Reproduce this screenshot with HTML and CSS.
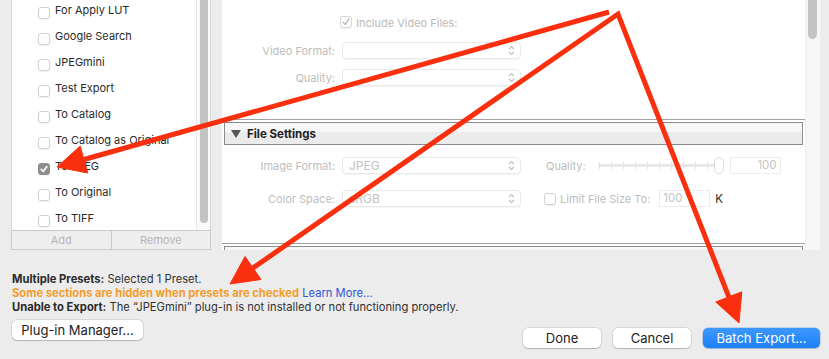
FILE: index.html
```html
<!DOCTYPE html>
<html>
<head>
<meta charset="utf-8">
<link rel="stylesheet" href="styles.css">
</head>
<body>
<div class="top">
  <div class="presets">
    <div class="list">
      <div class="rows">
        <div class="row"><span class="cb"></span><span>For Apply LUT</span></div>
        <div class="row"><span class="cb"></span><span>Google Search</span></div>
        <div class="row"><span class="cb"></span><span>JPEGmini</span></div>
        <div class="row"><span class="cb"></span><span>Test Export</span></div>
        <div class="row"><span class="cb"></span><span>To Catalog</span></div>
        <div class="row"><span class="cb"></span><span>To Catalog as Original</span></div>
        <div class="row"><span class="cb cb-on"><svg viewBox="0 0 12 12" width="12" height="12"><path d="M3.2 6.3 L5.2 8.4 L8.9 3.6" fill="none" stroke="#fff" stroke-width="1.6" stroke-linecap="round" stroke-linejoin="round"/></svg></span><span>To JPEG</span></div>
        <div class="row"><span class="cb"></span><span>To Original</span></div>
        <div class="row"><span class="cb"></span><span>To TIFF</span></div>
      </div>
      <div class="vscroll"><div class="vthumb"></div></div>
    </div>
    <div class="listbtns"><div class="lb">Add</div><div class="lb">Remove</div></div>
  </div>
  <div class="main">
    <div class="video">
      <div class="incl"><span class="cb cb-dis"><svg viewBox="0 0 12 12" width="12" height="12"><path d="M3.2 6.3 L5.2 8.6 L8.9 2.8" fill="none" stroke="#b9b9b9" stroke-width="1.3" stroke-linecap="round" stroke-linejoin="round"/></svg></span><span class="incl-t">Include Video Files:</span></div>
      <div class="frow"><span class="lab">Video Format:</span><span class="pop"><span></span><svg class="chev" viewBox="0 0 7 11" width="7" height="11"><path d="M1 4 L3.5 1.5 L6 4 M1 7 L3.5 9.5 L6 7" fill="none" stroke="#bdbdbd" stroke-width="1.1"/></svg></span></div>
      <div class="frow gap"><span class="lab">Quality:</span><span class="pop"><span></span><svg class="chev" viewBox="0 0 7 11" width="7" height="11"><path d="M1 4 L3.5 1.5 L6 4 M1 7 L3.5 9.5 L6 7" fill="none" stroke="#bdbdbd" stroke-width="1.1"/></svg></span></div>
    </div>
    <div class="shead"><span class="tri"></span><span>File Settings</span></div>
    <div class="fileset">
      <div class="frow"><span class="lab">Image Format:</span><span class="pop"><span>JPEG</span><svg class="chev" viewBox="0 0 7 11" width="7" height="11"><path d="M1 4 L3.5 1.5 L6 4 M1 7 L3.5 9.5 L6 7" fill="none" stroke="#bdbdbd" stroke-width="1.1"/></svg></span>
        <span class="qlab">Quality:</span>
        <span class="slider"><span class="sthumb"></span></span>
        <span class="num">100</span>
      </div>
      <div class="frow gap2"><span class="lab">Color Space:</span><span class="pop"><span>sRGB</span><svg class="chev" viewBox="0 0 7 11" width="7" height="11"><path d="M1 4 L3.5 1.5 L6 4 M1 7 L3.5 9.5 L6 7" fill="none" stroke="#bdbdbd" stroke-width="1.1"/></svg></span>
        <span class="cb lim"></span><span class="limt">Limit File Size To:</span>
        <span class="inp">100</span><span class="k">K</span>
      </div>
    </div>
    <div class="shead"></div>
  </div>
  <div class="mscroll"><div class="mthumb"></div></div>
</div>
<div class="bottom">
  <div class="left">
    <div class="msgs">
      <div><b>Multiple Presets:</b> Selected 1 Preset.</div>
      <div><span class="warn">Some sections are hidden when presets are checked</span> <span class="link">Learn More...</span></div>
      <div><b>Unable to Export:</b> The “JPEGmini” plug-in is not installed or not functioning properly.</div>
    </div>
    <div class="btn plug">Plug-in Manager...</div>
  </div>
  <div class="right">
    <div class="btn b1">Done</div>
    <div class="btn b1">Cancel</div>
    <div class="btn primary">Batch Export...</div>
  </div>
</div>
<svg class="arrows" width="829" height="359" viewBox="0 0 829 359">
  <g fill="#f92f0e" stroke="#f92f0e">
    <line x1="609" y1="12" x2="84" y2="159.5" stroke-width="5"/>
    <polyline points="253,268 618,14 728.8,296.9" fill="none" stroke-width="5" stroke-linejoin="miter"/>
    <polygon points="57,167 87.8,173 80.2,146" stroke-width="1"/>
    <polygon points="230,284 261,279.5 245,256.5" stroke-width="1"/>
    <polygon points="739,323 741.8,291.8 715.8,302" stroke-width="1"/>
  </g>
</svg>
</body>
</html>
```
FILE: styles.css
```css
body {
  margin: 0;
  width: 829px;
  height: 359px;
  overflow: hidden;
  position: relative;
  background: #ececec;
  font-family: Inter, "Noto Sans", sans-serif;
  font-size: 11px;
  color: #262626;
}
.top {
  display: flex;
  height: 250px;
}
.presets {
  margin-left: 11px;
  width: 200px;
  display: flex;
  flex-direction: column;
}
.list {
  flex: 1;
  display: flex;
  background: #fff;
  border-left: 1px solid #d8d8d8;
  border-right: 1px solid #d8d8d8;
  overflow: hidden;
}
.rows {
  flex: 1;
  margin-top: -3px;
}
.row {
  height: 26px;
  display: flex;
  align-items: center;
  padding-left: 26px;
  color: #2a2a2a;
}
.cb {
  display: inline-block;
  width: 12px;
  height: 12px;
  box-sizing: border-box;
  border: 1px solid #d2d2d2;
  border-radius: 3px;
  background: #fff;
  box-shadow: 0 0.5px 1px rgba(0, 0, 0, 0.06);
  flex: none;
}
.row .cb {
  margin-right: 5px;
  margin-top: 5px;
}
.cb svg {
  display: block;
  margin: -1px;
}
.cb-on {
  background: #8e8e8e;
  border-color: #8e8e8e;
}
.cb-dis {
  border-color: #d6d6d6;
}
.vscroll {
  width: 13px;
  border-left: 1px solid #e8e8e8;
  background: #fafafa;
}
.vthumb {
  margin-left: 3px;
  margin-top: -6px;
  width: 8px;
  height: 229px;
  border-radius: 4px;
  background: #c3c3c3;
}
.listbtns {
  display: flex;
  height: 20px;
}
.lb {
  flex: 1;
  border: 1px solid #cacaca;
  text-align: center;
  line-height: 18px;
  color: #b6b6b6;
  background: #eeeeee;
}
.lb + .lb {
  margin-left: -1px;
}
.main {
  margin-left: 11px;
  width: 583px;
  background: #fff;
  overflow: hidden;
}
.mscroll {
  width: 14px;
  border-left: 1px solid #eeeeee;
  background: #f7f7f7;
}
.mthumb {
  margin-left: 2px;
  margin-top: -6px;
  width: 9px;
  height: 45px;
  border-radius: 4.5px;
  background: #c3c3c3;
}
.video {
  height: 120px;
  box-sizing: border-box;
  border-bottom: 1px solid #a2a2a2;
  padding-top: 16px;
}
.incl {
  display: flex;
  align-items: center;
  height: 12px;
  margin-left: 118px;
  margin-bottom: 14px;
  color: #bababa;
}
.incl-t {
  margin-left: 4px;
  margin-top: 1px;
}
.frow {
  display: flex;
  align-items: center;
  height: 17px;
  color: #bdbdbd;
}
.frow.gap {
  margin-top: 10px;
}
.frow.gap2 {
  margin-top: 16px;
}
.lab {
  width: 120px;
  box-sizing: border-box;
  padding-right: 7px;
  text-align: right;
}
.pop {
  width: 179px;
  height: 17px;
  box-sizing: border-box;
  border: 1px solid #e9e9e9;
  border-radius: 4px;
  box-shadow: 0 1px 1px rgba(0, 0, 0, 0.04);
  display: flex;
  align-items: center;
  justify-content: space-between;
  padding: 0 5px 0 6px;
  color: #c2c2c2;
  font-size: 12px;
}
.chev {
  display: block;
}
.shead {
  margin: 2px 2px 0;
  height: 23px;
  box-sizing: border-box;
  border: 1px solid #8c8c8c;
  background: linear-gradient(#f7f7f7 0 45%, #ebebeb 45%);
  display: flex;
  align-items: center;
  padding-left: 6px;
  font-weight: 700;
  font-size: 11.5px;
  color: #1e1e1e;
}
.tri {
  width: 0;
  height: 0;
  border-left: 5px solid transparent;
  border-right: 5px solid transparent;
  border-top: 8px solid #555;
  margin-right: 6px;
}
.fileset {
  height: 99px;
  box-sizing: border-box;
  border-bottom: 1px solid #a2a2a2;
  padding-top: 12px;
}
.qlab {
  margin-left: 25px;
}
.slider {
  position: relative;
  margin-left: 12px;
  width: 126px;
  height: 17px;
  background:
    repeating-linear-gradient(90deg, #e2e2e2 0 1px, transparent 1px 12px) 1px 5px / 120px 7px no-repeat,
    linear-gradient(#e8e8e8, #e8e8e8) 0 7px / 120px 3px no-repeat;
}
.sthumb {
  position: absolute;
  left: 116px;
  top: 0;
  width: 10px;
  height: 17px;
  box-sizing: border-box;
  border: 1px solid #dadada;
  border-radius: 5px;
  background: #fff;
}
.num {
  margin-left: 6px;
  width: 51px;
  height: 17px;
  box-sizing: border-box;
  border: 1px solid #ececec;
  text-align: right;
  padding-right: 3px;
  line-height: 15px;
  color: #c4c4c4;
  font-size: 11.5px;
}
.lim {
  margin-left: 23px;
}
.limt {
  margin-left: 4px;
}
.inp {
  margin-left: 9px;
  width: 51px;
  height: 17px;
  box-sizing: border-box;
  border: 1px solid #ececec;
  padding-left: 3px;
  line-height: 15px;
  color: #c4c4c4;
  font-size: 11.5px;
}
.k {
  margin-left: 5px;
  color: #2a2a2a;
  font-size: 11.5px;
}
.bottom {
  display: flex;
  justify-content: space-between;
  align-items: flex-end;
  height: 109px;
  box-sizing: border-box;
  padding: 22px 9px 11px 12px;
}
.msgs {
  line-height: 14px;
  font-size: 11.2px;
  color: #333;
}
.msgs b {
  font-weight: 700;
  color: #2a2a2a;
}
.warn {
  color: #f29d2c;
  font-weight: 700;
}
.link {
  color: #2d55d6;
}
.btn {
  height: 20px;
  box-sizing: border-box;
  background: #fff;
  border-radius: 5px;
  box-shadow: 0 0 0 0.5px rgba(0, 0, 0, 0.18), 0 1px 1px rgba(0, 0, 0, 0.15);
  font-size: 13px;
  line-height: 20px;
  text-align: center;
  color: #222;
}
.plug {
  margin-top: 6px;
  margin-bottom: 8px;
  width: 131px;
}
.right {
  display: flex;
  gap: 12px;
}
.b1 {
  width: 78px;
}
.primary {
  width: 117px;
  background: linear-gradient(#3d98fc, #1b80f6);
  color: #fff;
  box-shadow: 0 0 0 0.5px rgba(0, 80, 200, 0.35), 0 1px 1px rgba(0, 0, 0, 0.15);
}
.arrows {
  position: absolute;
  left: 0;
  top: 0;
  pointer-events: none;
}
```
